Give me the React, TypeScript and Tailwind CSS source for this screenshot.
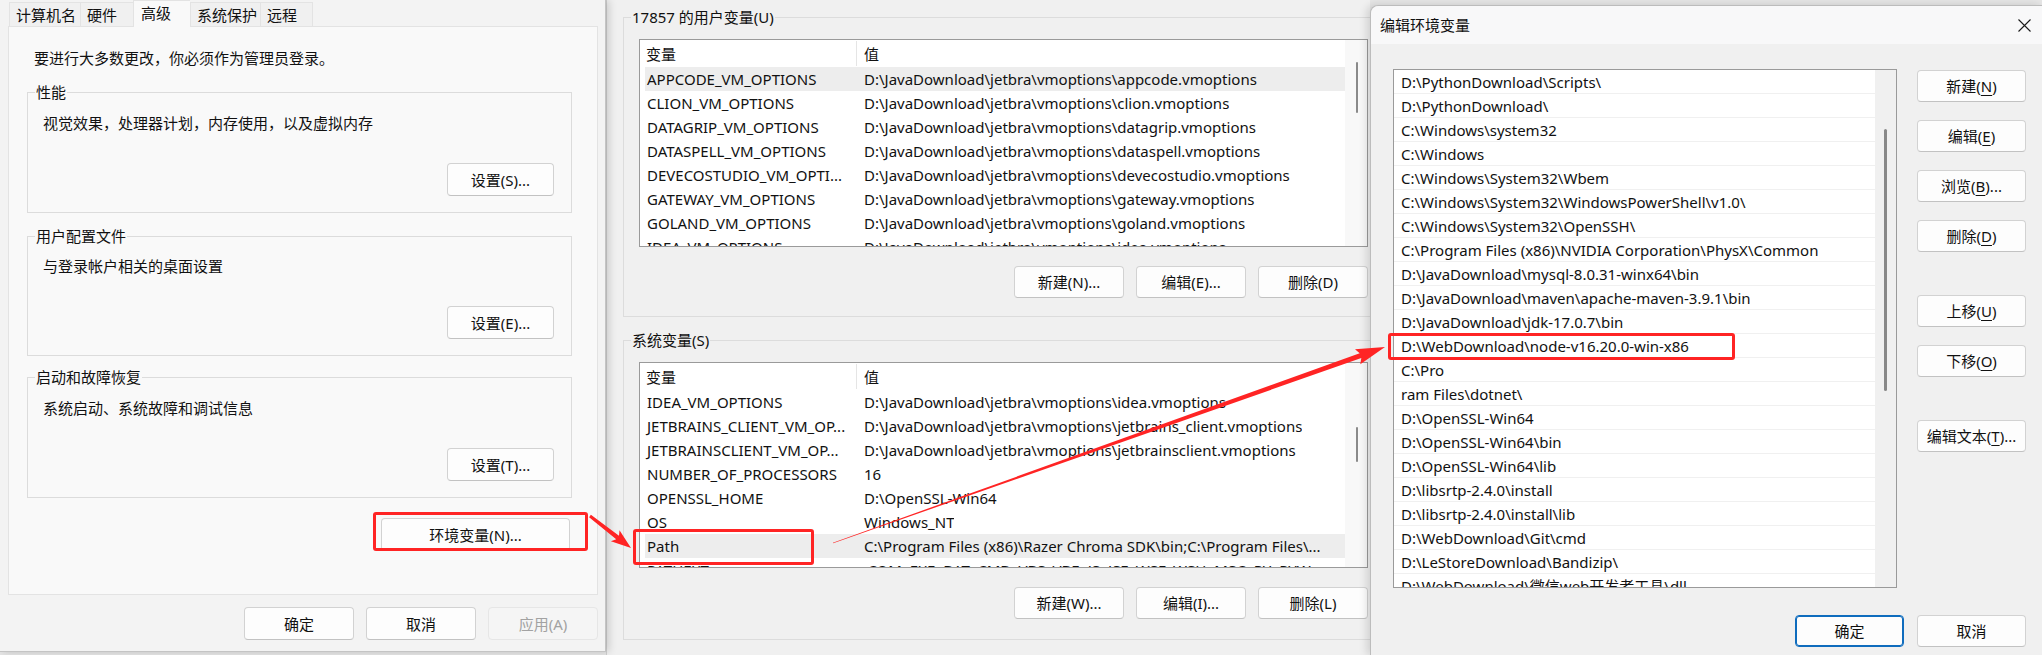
import React from "react";

// paths are written with "/" and shown with "\"
const p = (s: string) => s.replace(/\//g, "\\");

const userVars: [string, string][] = [
  ["APPCODE_VM_OPTIONS", p("D:/JavaDownload/jetbra/vmoptions/appcode.vmoptions")],
  ["CLION_VM_OPTIONS", p("D:/JavaDownload/jetbra/vmoptions/clion.vmoptions")],
  ["DATAGRIP_VM_OPTIONS", p("D:/JavaDownload/jetbra/vmoptions/datagrip.vmoptions")],
  ["DATASPELL_VM_OPTIONS", p("D:/JavaDownload/jetbra/vmoptions/dataspell.vmoptions")],
  ["DEVECOSTUDIO_VM_OPTI...", p("D:/JavaDownload/jetbra/vmoptions/devecostudio.vmoptions")],
  ["GATEWAY_VM_OPTIONS", p("D:/JavaDownload/jetbra/vmoptions/gateway.vmoptions")],
  ["GOLAND_VM_OPTIONS", p("D:/JavaDownload/jetbra/vmoptions/goland.vmoptions")],
  ["IDEA_VM_OPTIONS", p("D:/JavaDownload/jetbra/vmoptions/idea.vmoptions")],
];

const systemVars: [string, string][] = [
  ["IDEA_VM_OPTIONS", p("D:/JavaDownload/jetbra/vmoptions/idea.vmoptions")],
  ["JETBRAINS_CLIENT_VM_OP...", p("D:/JavaDownload/jetbra/vmoptions/jetbrains_client.vmoptions")],
  ["JETBRAINSCLIENT_VM_OP...", p("D:/JavaDownload/jetbra/vmoptions/jetbrainsclient.vmoptions")],
  ["NUMBER_OF_PROCESSORS", "16"],
  ["OPENSSL_HOME", p("D:/OpenSSL-Win64")],
  ["OS", "Windows_NT"],
  ["Path", p("C:/Program Files (x86)/Razer Chroma SDK/bin;C:/Program Files/...")],
  ["PATHEXT", ".COM;.EXE;.BAT;.CMD;.VBS;.VBE;.JS;.JSE;.WSF;.WSH;.MSC;.PY;.PYW"],
];

const pathItems = [
  "D:/PythonDownload/Scripts/",
  "D:/PythonDownload/",
  "C:/Windows/system32",
  "C:/Windows",
  "C:/Windows/System32/Wbem",
  "C:/Windows/System32/WindowsPowerShell/v1.0/",
  "C:/Windows/System32/OpenSSH/",
  "C:/Program Files (x86)/NVIDIA Corporation/PhysX/Common",
  "D:/JavaDownload/mysql-8.0.31-winx64/bin",
  "D:/JavaDownload/maven/apache-maven-3.9.1/bin",
  "D:/JavaDownload/jdk-17.0.7/bin",
  "D:/WebDownload/node-v16.20.0-win-x86",
  "C:/Pro",
  "ram Files/dotnet/",
  "D:/OpenSSL-Win64",
  "D:/OpenSSL-Win64/bin",
  "D:/OpenSSL-Win64/lib",
  "D:/libsrtp-2.4.0/install",
  "D:/libsrtp-2.4.0/install/lib",
  "D:/WebDownload/Git/cmd",
  "D:/LeStoreDownload/Bandizip/",
  "D:/WebDownload/微信web开发者工具/dll",
].map(p);

function Btn({
  children,
  className = "",
  disabled = false,
  primary = false,
}: {
  children: React.ReactNode;
  className?: string;
  disabled?: boolean;
  primary?: boolean;
}) {
  const tone = disabled
    ? "bg-[#f5f5f5] border-[#e6e6e6] text-[#a2a2a2]"
    : primary
    ? "bg-[#fdfdfd] border-[#0f6cbd] shadow-[inset_0_0_0_1px_#0f6cbd]"
    : "bg-[#fdfdfd] border-[#d2d2d2] border-b-[#c2c2c2]";
  return (
    <div
      className={`flex shrink-0 items-center justify-center rounded-[4px] border whitespace-nowrap ${tone} ${className}`}
    >
      {children}
    </div>
  );
}

function Group({
  label,
  className = "",
  bodyClass = "",
  children,
}: {
  label: string;
  className?: string;
  bodyClass?: string;
  children: React.ReactNode;
}) {
  return (
    <div className={`flex flex-col ${className}`}>
      <div className="flex h-[20px]">
        <div className="h-[10px] w-[8px] self-end border-l border-t border-[#dcdcdc]" />
        <span className="px-[1px] leading-[20px] whitespace-nowrap">{label}</span>
        <div className="h-[10px] flex-1 self-end border-r border-t border-[#dcdcdc]" />
      </div>
      <div className={`flex flex-col border-x border-b border-[#dcdcdc] ${bodyClass}`}>
        {children}
      </div>
    </div>
  );
}

function Tab({ label, w, active = false }: { label: string; w: string; active?: boolean }) {
  return (
    <div
      className={
        active
          ? `relative z-10 -mb-px flex h-[27px] items-center border-l border-t border-[#e3e3e3] bg-[#f9f9f9] pb-[2px] pl-[7px] ${w}`
          : `flex h-[24px] items-center border-l border-t border-[#e3e3e3] bg-[#f0f0f0] pl-[6px] ${w}`
      }
    >
      {label}
    </div>
  );
}

function SystemProperties() {
  return (
    <div className="relative z-10 flex h-[652px] w-[606px] shrink-0 flex-col border-b border-r border-[#c4c4c4] bg-[#f3f3f3] shadow-[3px_0_8px_rgba(0,0,0,0.16)]">
      <div className="flex h-[26px] items-end pl-[9px]">
        <Tab label="计算机名" w="w-[71px]" />
        <Tab label="硬件" w="w-[53px]" />
        <Tab label="高级" w="w-[57px]" active />
        <Tab label="系统保护" w="w-[70px]" />
        <div className="border-r border-[#e3e3e3]">
          <Tab label="远程" w="w-[52px]" />
        </div>
      </div>

      <div className="ml-[8px] flex h-[569px] w-[590px] flex-col border border-[#e3e3e3] bg-[#f9f9f9]">
        <p className="mt-[21px] pl-[25px]">要进行大多数更改，你必须作为管理员登录。</p>

        <Group label="性能" className="ml-[18px] mt-[14px] w-[545px]" bodyClass="h-[111px]">
          <p className="pl-[15px] pt-[11px]">视觉效果，处理器计划，内存使用，以及虚拟内存</p>
          <Btn className="mb-[16px] mr-[17px] mt-auto h-[33px] w-[107px] self-end">设置(S)...</Btn>
        </Group>

        <Group label="用户配置文件" className="ml-[18px] mt-[13px] w-[545px]" bodyClass="h-[110px]">
          <p className="pl-[15px] pt-[10px]">与登录帐户相关的桌面设置</p>
          <Btn className="mb-[16px] mr-[17px] mt-auto h-[33px] w-[107px] self-end">设置(E)...</Btn>
        </Group>

        <Group label="启动和故障恢复" className="ml-[18px] mt-[11px] w-[545px]" bodyClass="h-[111px]">
          <p className="pl-[15px] pt-[11px]">系统启动、系统故障和调试信息</p>
          <Btn className="mb-[16px] mr-[17px] mt-auto h-[33px] w-[107px] self-end">设置(T)...</Btn>
        </Group>

        <Btn className="mr-[27px] mt-[20px] h-[33px] w-[189px] self-end">环境变量(N)...</Btn>
      </div>

      <div className="mt-[12px] flex justify-end gap-[12px] pr-[7px]">
        <Btn className="h-[33px] w-[110px]">确定</Btn>
        <Btn className="h-[33px] w-[110px]">取消</Btn>
        <Btn className="h-[33px] w-[110px]" disabled>
          应用(A)
        </Btn>
      </div>
    </div>
  );
}

function VarList({
  rows,
  selected,
  height,
  thumbTop,
  thumbHeight,
}: {
  rows: [string, string][];
  selected: number;
  height: string;
  thumbTop: string;
  thumbHeight: string;
}) {
  return (
    <div className={`ml-[15px] mt-[12px] flex w-[729px] overflow-hidden border border-[#9a9a9a] bg-white ${height}`}>
      <div className="flex min-w-0 flex-1 flex-col overflow-hidden pl-[5px]">
        <div className="flex h-[27px] shrink-0 items-center">
          <div className="flex h-[25px] w-[212px] shrink-0 items-center border-r border-[#e5e5e5] pl-[1px]">变量</div>
          <div className="pl-[7px]">值</div>
        </div>
        {rows.map(([name, value], i) => (
          <div
            key={name + i}
            className={`flex h-[24px] shrink-0 items-center whitespace-nowrap ${i === selected ? "bg-[#ededed]" : ""}`}
          >
            <div className="w-[212px] shrink-0 overflow-hidden pl-[2px]">{name}</div>
            <div className="overflow-hidden pl-[7px]">{value}</div>
          </div>
        ))}
      </div>
      <div className="flex w-[22px] shrink-0 justify-center bg-[#f8f8f8] pl-[1px]">
        <div className={`w-[2px] rounded-full bg-[#8a8a8a] ${thumbTop} ${thumbHeight}`} />
      </div>
    </div>
  );
}

function EnvironmentVariables() {
  return (
    <div className="flex h-full w-[764px] shrink-0 flex-col overflow-hidden border-l border-[#cfcfcf] bg-[#f0f0f0] pl-[16px] pt-[7px]">
      <Group label="17857 的用户变量(U)" className="w-[760px] shrink-0" bodyClass="h-[290px]">
        <VarList rows={userVars} selected={0} height="h-[208px]" thumbTop="mt-[22px]" thumbHeight="h-[51px]" />
        <div className="ml-[15px] mt-[19px] flex w-[729px] justify-end gap-[12px]">
          <Btn className="h-[32px] w-[110px]">新建(N)...</Btn>
          <Btn className="h-[32px] w-[110px]">编辑(E)...</Btn>
          <Btn className="h-[32px] w-[110px]">删除(D)</Btn>
        </div>
      </Group>

      <Group label="系统变量(S)" className="mt-[13px] w-[760px] shrink-0" bodyClass="h-[290px]">
        <VarList rows={systemVars} selected={6} height="h-[206px]" thumbTop="mt-[64px]" thumbHeight="h-[35px]" />
        <div className="ml-[15px] mt-[19px] flex w-[729px] justify-end gap-[12px]">
          <Btn className="h-[32px] w-[110px]">新建(W)...</Btn>
          <Btn className="h-[32px] w-[110px]">编辑(I)...</Btn>
          <Btn className="h-[32px] w-[110px]">删除(L)</Btn>
        </div>
      </Group>
    </div>
  );
}

function Acc({ pre, k, post }: { pre: string; k: string; post: string }) {
  return (
    <span>
      {pre}
      <span className="underline decoration-1 underline-offset-[3px]">{k}</span>
      {post}
    </span>
  );
}

function EditPathDialog() {
  return (
    <div className="flex min-w-0 flex-1 flex-col pt-[5px]">
      <div className="flex flex-1 flex-col rounded-tl-[8px] border-l border-t border-[#bcbcbc] bg-[#f0f0f0] shadow-[-3px_0_8px_rgba(0,0,0,0.14)]">
        <div className="flex h-[38px] shrink-0 items-center justify-between rounded-tl-[8px] bg-[#f8f8f9] pl-[9px] pr-[10px]">
          <span>编辑环境变量</span>
          <svg width="15" height="15" viewBox="0 0 15 15" fill="none" stroke="#1a1a1a" strokeWidth="1.1">
            <path d="M1.5 1.5 L13.5 13.5 M13.5 1.5 L1.5 13.5" />
          </svg>
        </div>

        <div className="mt-[25px] flex h-[519px] shrink-0">
          <div className="ml-[22px] flex w-[504px] overflow-hidden border border-[#9a9a9a] bg-white">
            <div className="flex min-w-0 flex-1 flex-col overflow-hidden">
              {pathItems.map((item, i) => (
                <div
                  key={item + i}
                  className="flex h-[24px] shrink-0 items-center whitespace-nowrap border-b border-[#f0f0f0] pl-[7px]"
                >
                  {item}
                </div>
              ))}
            </div>
            <div className="flex w-[21px] shrink-0 justify-center bg-[#f0f0f0]">
              <div className="mt-[59px] h-[262px] w-[3px] rounded-full bg-[#888888]" />
            </div>
          </div>

          <div className="ml-[20px] mt-px flex w-[109px] flex-col">
            <Btn className="h-[32px]">
              <Acc pre="新建(" k="N" post=")" />
            </Btn>
            <Btn className="mt-[18px] h-[32px]">
              <Acc pre="编辑(" k="E" post=")" />
            </Btn>
            <Btn className="mt-[18px] h-[32px]">
              <Acc pre="浏览(" k="B" post=")..." />
            </Btn>
            <Btn className="mt-[18px] h-[32px]">
              <Acc pre="删除(" k="D" post=")" />
            </Btn>
            <Btn className="mt-[43px] h-[32px]">
              <Acc pre="上移(" k="U" post=")" />
            </Btn>
            <Btn className="mt-[18px] h-[32px]">
              <Acc pre="下移(" k="O" post=")" />
            </Btn>
            <Btn className="mt-[43px] h-[32px]">
              <Acc pre="编辑文本(" k="T" post=")..." />
            </Btn>
          </div>
        </div>

        <div className="mt-[27px] flex justify-end gap-[13px] pr-[16px]">
          <Btn className="h-[32px] w-[109px]" primary>
            确定
          </Btn>
          <Btn className="h-[32px] w-[109px]">取消</Btn>
        </div>
      </div>
    </div>
  );
}

function arrowPoints(
  x1: number,
  y1: number,
  x2: number,
  y2: number,
  w0: number,
  w1: number,
  headLen: number,
  headW: number
) {
  const dx = x2 - x1;
  const dy = y2 - y1;
  const len = Math.hypot(dx, dy);
  const ux = dx / len;
  const uy = dy / len;
  const nx = -uy;
  const ny = ux;
  const bx = x2 - ux * headLen;
  const by = y2 - uy * headLen;
  const pts = [
    [x1 + (nx * w0) / 2, y1 + (ny * w0) / 2],
    [bx + (nx * w1) / 2, by + (ny * w1) / 2],
    [bx - ux * 3 + (nx * headW) / 2, by - uy * 3 + (ny * headW) / 2],
    [x2, y2],
    [bx - ux * 3 - (nx * headW) / 2, by - uy * 3 - (ny * headW) / 2],
    [bx - (nx * w1) / 2, by - (ny * w1) / 2],
    [x1 - (nx * w0) / 2, y1 - (ny * w0) / 2],
  ];
  return pts.map(([x, y]) => `${x.toFixed(1)},${y.toFixed(1)}`).join(" ");
}

function Annotations() {
  return (
    <div className="pointer-events-none absolute inset-0 z-50">
      <div className="absolute left-[373px] top-[512px] h-[39px] w-[215px] rounded-[3px] border-[3px] border-[#ff2424]" />
      <div className="absolute left-[633px] top-[529px] h-[36px] w-[181px] rounded-[3px] border-[3px] border-[#ff2424]" />
      <div className="absolute left-[1388px] top-[333px] h-[27px] w-[347px] rounded-[3px] border-[3px] border-[#ff2424]" />
      <svg className="absolute inset-0" width="2042" height="655" viewBox="0 0 2042 655">
        <polygon points={arrowPoints(590, 516, 631, 548, 3, 4.5, 17, 14)} fill="#ff2424" />
        <polygon points={arrowPoints(833, 543, 1385, 347, 0.6, 5, 26, 16)} fill="#ff2424" />
      </svg>
    </div>
  );
}

export default function App() {
  return (
    <div className="relative flex h-[655px] w-[2042px] overflow-hidden bg-[#e6e6e6] font-['Noto_Sans','Noto_Sans_CJK_SC',sans-serif] text-[15px] leading-[20px] text-[#111]">
      <SystemProperties />
      <EnvironmentVariables />
      <EditPathDialog />
      <Annotations />
    </div>
  );
}
